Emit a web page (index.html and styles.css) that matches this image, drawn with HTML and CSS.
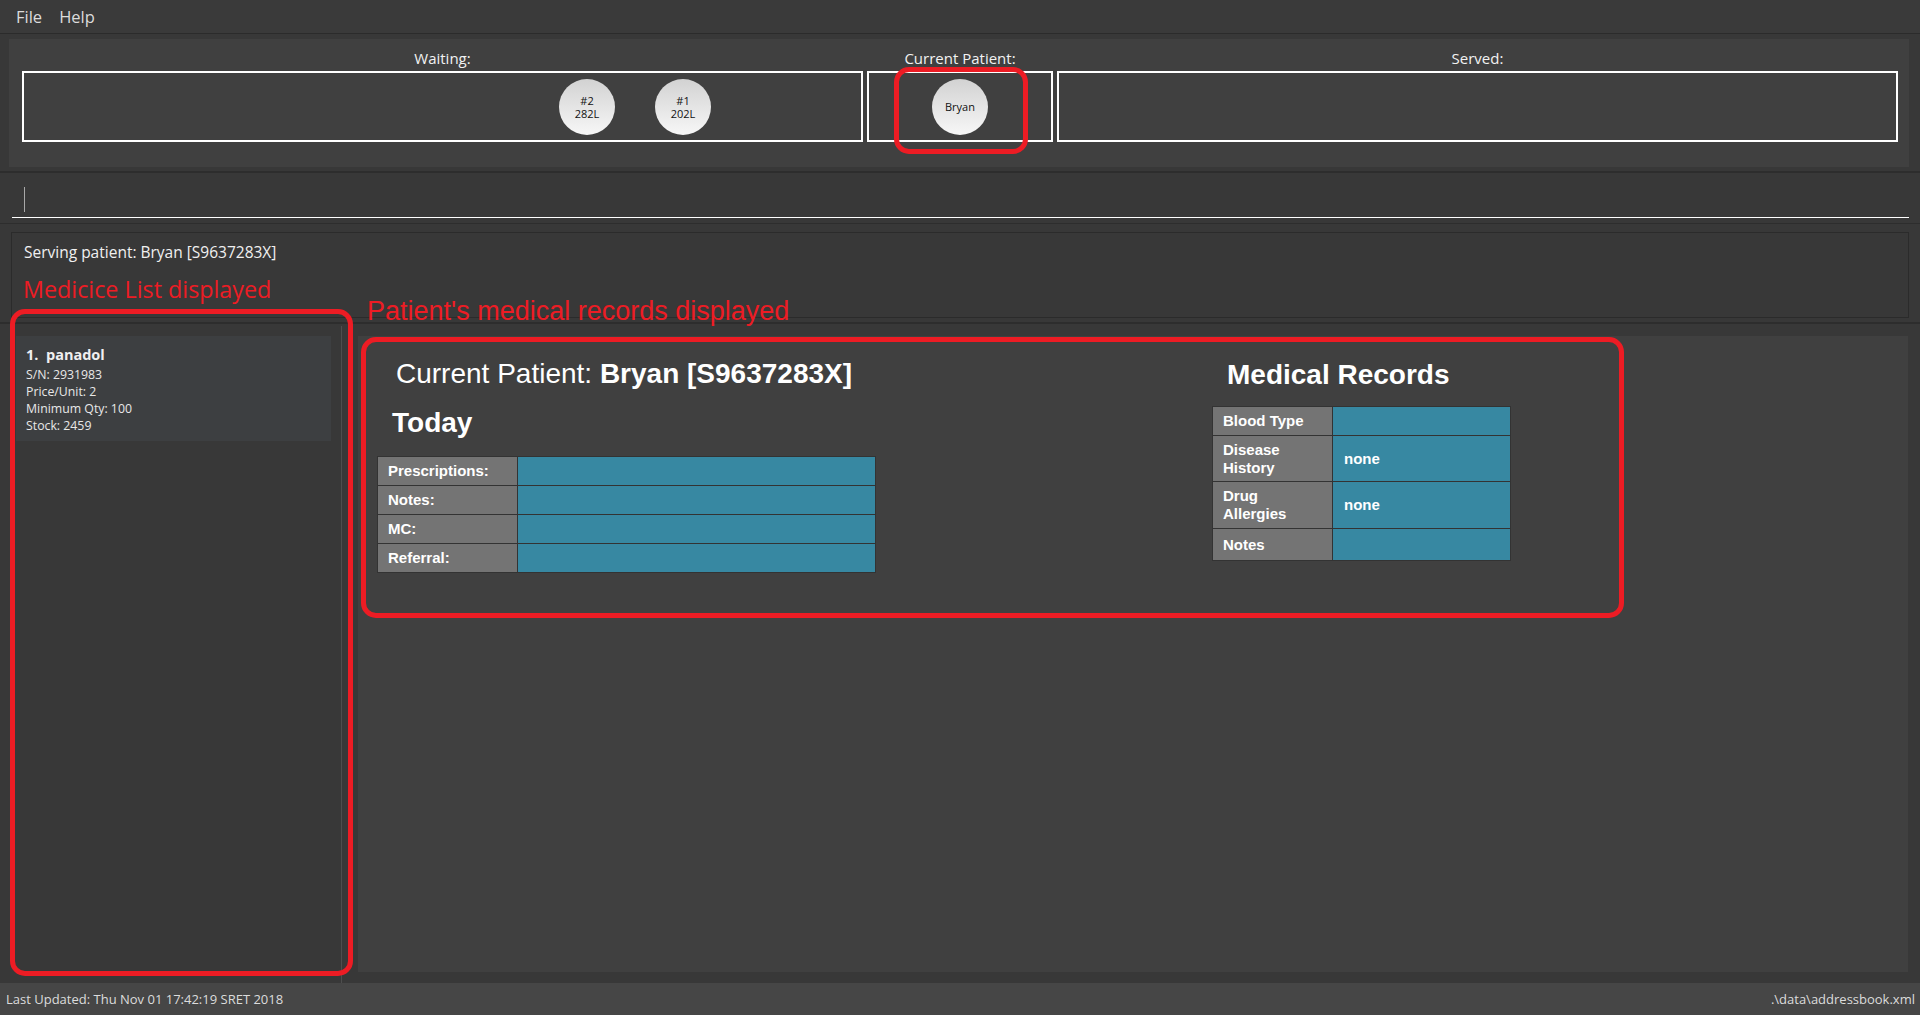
FILE: index.html
```html
<!DOCTYPE html>
<html>
<head>
<meta charset="utf-8">
<link rel="stylesheet" href="styles.css">
</head>
<body>
<div class="app">
  <div class="menubar">
    <span class="menu-item">File</span>
    <span class="menu-item">Help</span>
  </div>

  <div class="queue-pane">
    <div class="queue-inner">
      <div class="qcol">
        <div class="qlabel">Waiting:</div>
        <div class="qbox waiting">
          <div class="token">#2<br>282L</div>
          <div class="token">#1<br>202L</div>
        </div>
      </div>
      <div class="qcol">
        <div class="qlabel">Current Patient:</div>
        <div class="qbox current">
          <div class="token">Bryan</div>
        </div>
      </div>
      <div class="qcol">
        <div class="qlabel">Served:</div>
        <div class="qbox"></div>
      </div>
    </div>
  </div>

  <div class="command-pane">
    <div class="command-field"><span class="caret"></span></div>
  </div>

  <div class="result-pane">
    <div class="result-box">Serving patient: Bryan [S9637283X]</div>
  </div>

  <div class="split">
    <div class="list-pane">
      <div class="list-cell">
        <div class="cell-title">1.&nbsp;&nbsp;panadol</div>
        <div class="cell-line">S/N: 2931983</div>
        <div class="cell-line">Price/Unit: 2</div>
        <div class="cell-line">Minimum Qty: 100</div>
        <div class="cell-line">Stock: 2459</div>
      </div>
    </div>
    <div class="divider"></div>
    <div class="browser-pane">
      <div class="today-col">
        <div class="patient-heading">Current Patient: <b>Bryan [S9637283X]</b></div>
        <div class="today-heading">Today</div>
        <table class="rec-table today-table">
          <tr><th>Prescriptions:</th><td></td></tr>
          <tr><th>Notes:</th><td></td></tr>
          <tr><th>MC:</th><td></td></tr>
          <tr><th>Referral:</th><td></td></tr>
        </table>
      </div>
      <div class="records-col">
        <div class="records-heading">Medical Records</div>
        <table class="rec-table records-table">
          <tr class="r1"><th>Blood Type</th><td></td></tr>
          <tr class="r2"><th>Disease History</th><td>none</td></tr>
          <tr class="r3"><th>Drug Allergies</th><td>none</td></tr>
          <tr class="r4"><th>Notes</th><td></td></tr>
        </table>
      </div>
    </div>
  </div>

  <div class="statusbar">
    <span>Last Updated: Thu Nov 01 17:42:19 SRET 2018</span>
    <span>.\data\addressbook.xml</span>
  </div>

  <div class="annot annot-current"></div>
  <div class="annot-text annot-list-text">Medicice List displayed</div>
  <div class="annot annot-list"></div>
  <div class="annot-text annot-records-text">Patient's medical records displayed</div>
  <div class="annot annot-records"></div>
</div>
</body>
</html>
```

FILE: styles.css
```css
* { box-sizing: border-box; }

html, body {
  margin: 0;
  padding: 0;
  background: #383838;
}

body {
  font-family: "Open Sans", "Noto Sans", sans-serif;
  color: #f0f0f0;
}

.app {
  position: relative;
  width: 1920px;
  height: 1015px;
  display: flex;
  flex-direction: column;
  overflow: hidden;
}

/* menu */
.menubar {
  height: 34px;
  flex: none;
  background: #3a3a3a;
  border-bottom: 1px solid #2b2b2b;
  display: flex;
  align-items: center;
  gap: 17px;
  padding-left: 16px;
  font-size: 16.5px;
  color: #dcdcdc;
}

/* queue */
.queue-pane {
  flex: none;
  height: 139px;
  padding: 5px 11px 4px 9px;
  border-bottom: 2px solid #2d2d2d;
  background: #383838;
}

.queue-inner {
  height: 128px;
  background: #404040;
  padding: 9px 11px 0 13px;
  display: grid;
  grid-template-columns: 1fr 186px 1fr;
  column-gap: 4px;
}

.qlabel {
  height: 20px;
  line-height: 20px;
  text-align: center;
  font-size: 15px;
  color: #f2f2f2;
  margin-bottom: 3px;
}

.qbox {
  height: 71px;
  border: 2px solid #ffffff;
  display: flex;
  align-items: center;
}

.qbox.waiting {
  padding-left: 535px;
  gap: 40px;
}

.qbox.current {
  justify-content: center;
}

.token {
  width: 56px;
  height: 56px;
  border-radius: 50%;
  background: linear-gradient(#d2d2d2, #f7f7f7);
  color: #111;
  font-size: 11px;
  line-height: 13px;
  display: flex;
  align-items: center;
  justify-content: center;
  text-align: center;
  flex: none;
}

/* command */
.command-pane {
  flex: none;
  height: 51px;
  padding: 0 11px 0 12px;
  border-bottom: 1px solid #2d2d2d;
}

.command-field {
  height: 45px;
  border-bottom: 1px solid #ffffff;
  padding: 14px 0 0 12px;
}

.caret {
  display: block;
  width: 1px;
  height: 25px;
  background: #a8a8a8;
}

/* result */
.result-pane {
  flex: none;
  height: 100px;
  padding: 8px 11px 5px 11px;
  border-bottom: 2px solid #2d2d2d;
}

.result-box {
  height: 86px;
  border: 1px solid #2b2b2b;
  padding: 9px 12px;
  font-size: 15.5px;
  line-height: 20px;
  color: #f0f0f0;
}

/* split */
.split {
  flex: 1;
  display: flex;
  min-height: 0;
}

.list-pane {
  width: 341px;
  flex: none;
  padding: 12px 10px 0 16px;
}

.list-cell {
  height: 105px;
  background: #3d3f41;
  padding: 9px 10px 0 10px;
}

.cell-title {
  font-size: 14.5px;
  font-weight: 700;
  line-height: 20px;
  color: #f0f0f0;
  margin-bottom: 1px;
}

.cell-line {
  font-size: 12.3px;
  line-height: 17px;
  color: #e8e8e8;
}

.divider {
  width: 1px;
  flex: none;
  background: #4e4e4e;
  margin-top: 2px;
}

.browser-pane {
  flex: 1;
  margin: 12px 12px 11px 16px;
  background: #404040;
  display: flex;
  font-family: "Liberation Sans", Arial, sans-serif;
  color: #ffffff;
  padding: 23px 0 0 19px;
}

.today-col {
  width: 835px;
  flex: none;
}

.patient-heading {
  font-size: 28px;
  line-height: 30px;
  margin-left: 19px;
}

.today-heading {
  font-size: 28px;
  font-weight: 700;
  line-height: 32px;
  margin: 18px 0 17px 15px;
}

.records-col {
  padding-top: 0;
}

.records-heading {
  font-size: 28px;
  font-weight: 700;
  line-height: 32px;
  margin: 0 0 15px 15px;
}

.rec-table {
  border-collapse: collapse;
  border: 1px solid #333333;
  font-size: 15px;
  font-weight: 700;
  color: #ffffff;
}

.rec-table th,
.rec-table td {
  border: 1px solid #333333;
  padding: 0 10px;
  text-align: left;
  vertical-align: middle;
  line-height: 18px;
}

.rec-table th {
  background: #747474;
}

.rec-table td {
  background: #3788a2;
  padding-left: 11px;
}

.today-table th { width: 140px; height: 29px; }
.today-table td { width: 358px; }

.records-table th { width: 120px; }
.records-table td { width: 178px; }
.records-table .r1 th { height: 29px; }
.records-table .r2 th { height: 46px; }
.records-table .r3 th { height: 47px; }
.records-table .r4 th { height: 32px; }

/* status */
.statusbar {
  flex: none;
  height: 32px;
  background: #464646;
  display: flex;
  align-items: center;
  justify-content: space-between;
  padding: 0 5px 0 6px;
  font-size: 13px;
  color: #dcdcdc;
}

/* annotations (overlay) */
.annot {
  position: absolute;
  border: 5px solid #ed1c24;
  border-radius: 15px;
  pointer-events: none;
}

.annot-current {
  left: 894px;
  top: 67px;
  width: 134px;
  height: 87px;
}

.annot-list {
  left: 10px;
  top: 309px;
  width: 343px;
  height: 667px;
}

.annot-records {
  left: 361px;
  top: 337px;
  width: 1263px;
  height: 281px;
}

.annot-text {
  position: absolute;
  color: #ed1c24;
  white-space: nowrap;
}

.annot-list-text {
  left: 23px;
  top: 273px;
  font-family: "Open Sans", sans-serif;
  font-size: 23.3px;
  line-height: 32px;
}

.annot-records-text {
  left: 367px;
  top: 294px;
  font-family: "Liberation Sans", Arial, sans-serif;
  font-size: 27px;
  line-height: 34px;
}
```
